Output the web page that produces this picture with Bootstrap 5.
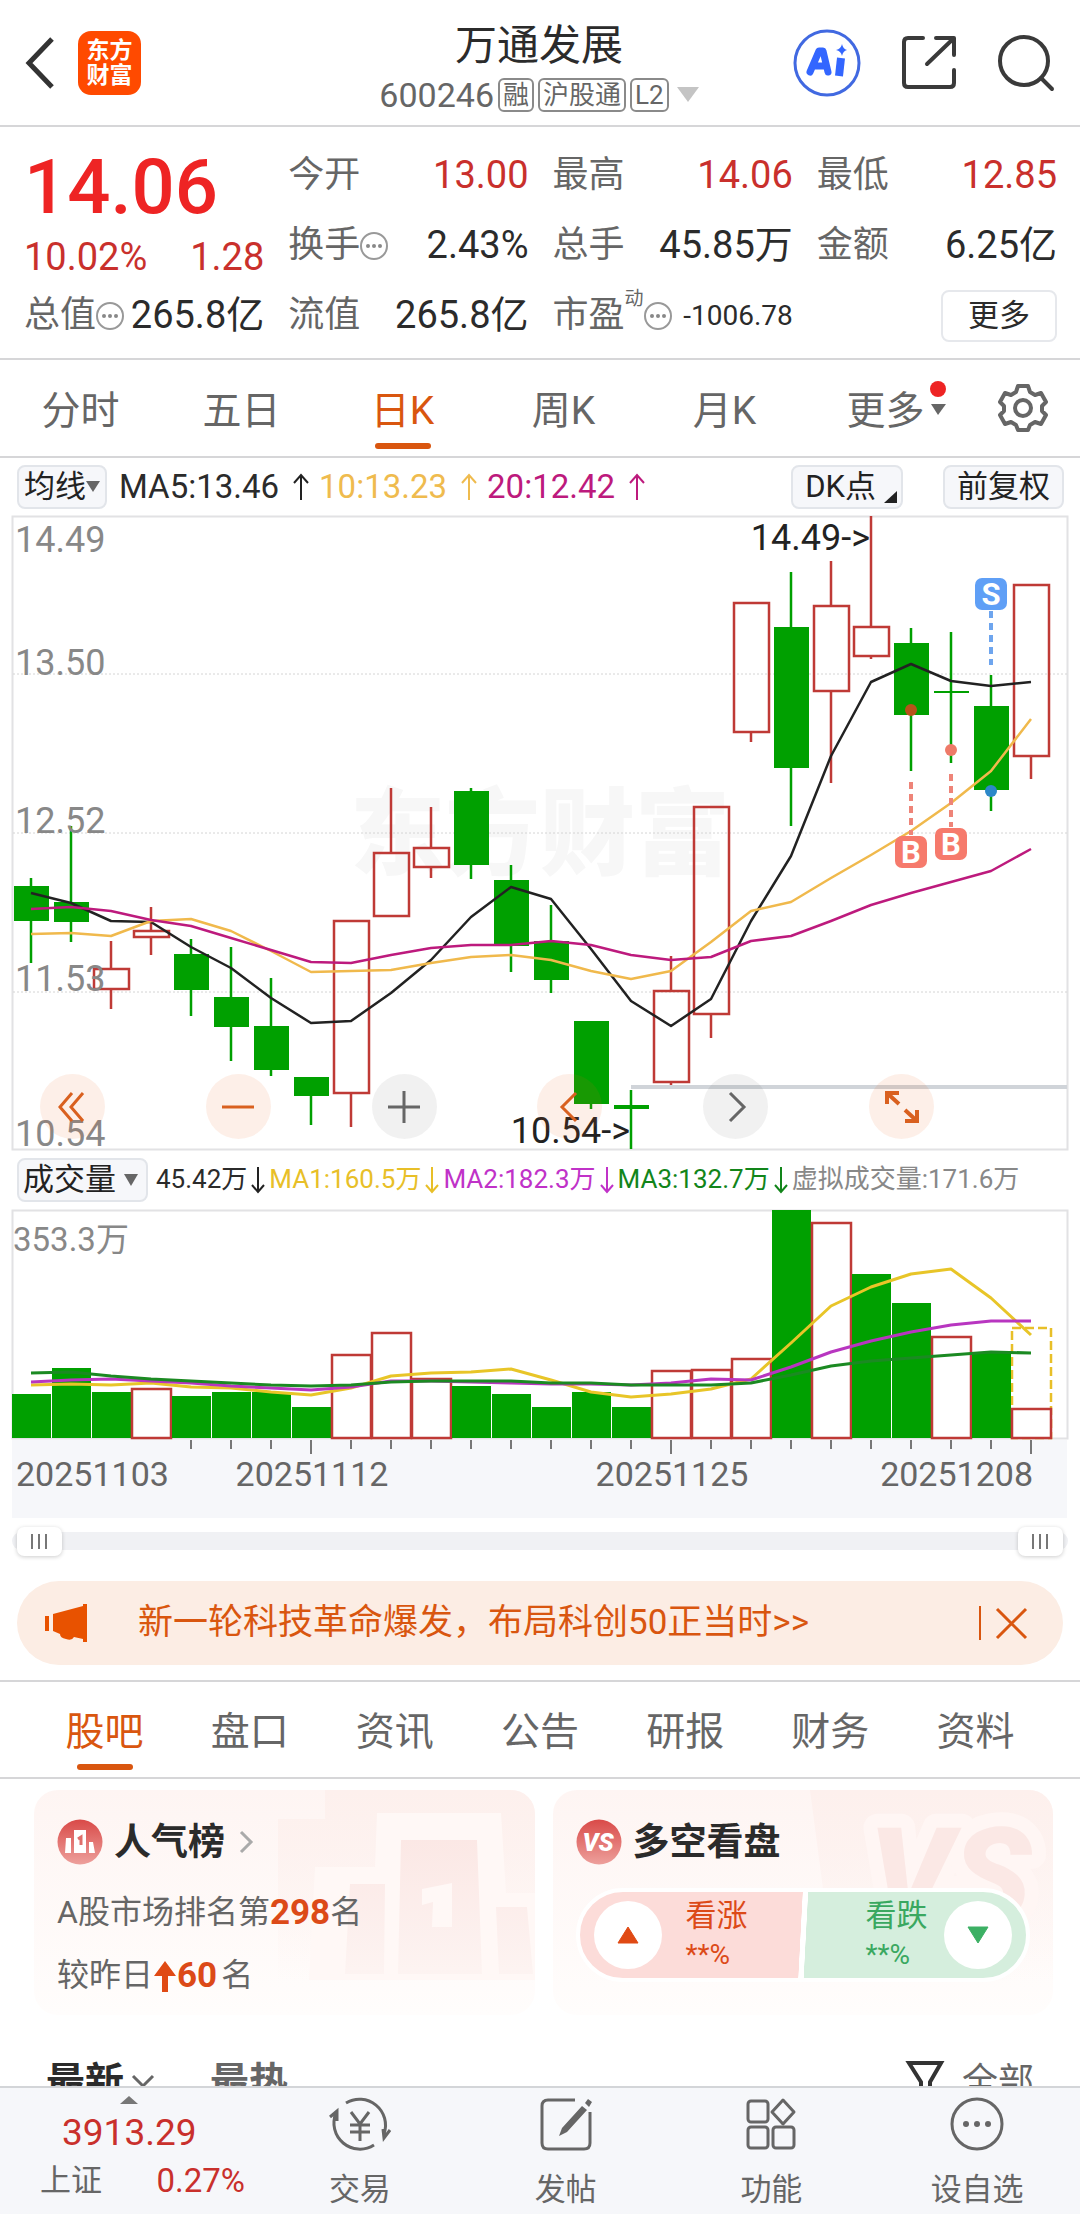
<!DOCTYPE html>
<html lang="zh-CN">
<head>
<meta charset="utf-8">
<meta name="viewport" content="width=device-width, initial-scale=1">
<title>万通发展 600246</title>
<link rel="stylesheet" href="https://cdn.jsdelivr.net/npm/bootstrap@5.3.0/dist/css/bootstrap.min.css">
<style>
  :root { --up:#c9302c; --brand:#d9560f; --ink:#2b2b2b; --dim:#666; --rule:#d6d6d8; --soft:#f6f7fa; }
  body { font-family: Roboto, "Noto Sans CJK SC", sans-serif; color: var(--ink); background: #fff; font-size: 31px; line-height: 1.2; overflow-x: hidden; }
  button { font-family: inherit; color: inherit; border: 0; background: none; padding: 0; line-height: 1.2; }
  svg { display: block; overflow: visible; }
  a { color: inherit; text-decoration: none; }
  .ruled { border-bottom: 2px solid var(--rule); }
  .up-text { color: var(--up); }
  .dim-text { color: var(--dim); }

  .top-bar { height: 127px; padding: 0 26px 0 24px; }
  .app-logo { width: 63px; height: 64px; margin-left: 22px; border-radius: 13px; background: #ff4a00; color: #fff; font-size: 23px; line-height: 25px; font-weight: 700; }
  .side-box { flex: 1 1 0; gap: 41px; }
  .stock-name { font-size: 42px; line-height: 50px; font-weight: 400; }
  .stock-code { font-size: 34px; line-height: 36px; color: var(--dim); margin-top: 6px; }
  .tag-box { border: 2px solid #8a8a8a; border-radius: 6px; font-size: 26px; line-height: 30px; padding: 0 3px; }

  .quote-grid { display: grid; grid-template-columns: repeat(4, minmax(0, 1fr)); column-gap: 24px; grid-template-rows: 70px 70px 70px; padding: 14px 23px 7px 24px; }
  .quote-grid > div { white-space: nowrap; }
  .price-cell { grid-row: span 2; padding: 6px 0 0; }
  .last-price { font-size: 76px; line-height: 80px; font-weight: 500; color: #ee2424; }
  .q-num { font-size: 38px; }
  .q-label { font-size: 36px; color: var(--dim); }
  .q-small { font-size: 28px; }
  .sup-mark { font-size: 19px; line-height: 20px; align-self: flex-start; padding-top: 8px; color: var(--dim); }
  .more-btn { height: 52px; width: 116px; border: 2px solid #e6e8ec; border-radius: 8px; font-size: 31px; }

  .tab-strip { height: 98px; }
  .tab-strip button, .sub-tabs button { flex: 1 1 0; height: 100%; padding-top: 6px; font-size: 39px; color: var(--dim); position: relative; }
  .tab-strip .gear-btn { flex: 0 0 114px; display: flex; justify-content: center; align-items: center; padding: 0; }
  .tab-strip .on, .sub-tabs .on { color: var(--brand); }
  .on::after { content: ""; position: absolute; bottom: 7px; left: 50%; width: 56px; height: 6px; margin-left: -28px; border-radius: 3px; background: var(--brand); }
  .red-dot { position: absolute; width: 16px; height: 16px; border-radius: 50%; background: #ee2424; right: 20px; top: 21px; }
  .tab-caret { position: absolute; right: 20px; top: 44px; }
  .ma-row { height: 57px; padding: 0 16px 0 17px; font-size: 33px; white-space: nowrap; }
  .ma-row .chip-btn { padding: 0 12px; }
  .ma-row .chip-btn:first-child { padding: 0 5px; }
  .ma-row .chip-btn:last-child { margin-left: 40px; }
  .chip-btn { height: 44px; border: 2px solid #e2e5ea; border-radius: 8px; background: var(--soft); font-size: 31px; color: #222; }
  .vol-row { height: 58px; padding: 0 16px 0 17px; font-size: 26px; white-space: nowrap; }
  .full-svg { width: 100%; height: auto; }
  svg text { font-family: Roboto, "Noto Sans CJK SC", sans-serif; }

  .chart-tools { position: absolute; left: 40px; right: 146px; bottom: 12px; }
  .round-btn { width: 65px; height: 65px; border-radius: 50%; background: rgba(238,100,30,.1); display: flex; align-items: center; justify-content: center; }
  .round-btn.grey { background: rgba(60,60,60,.07); }

  .range-wrap { position: relative; height: 18px; margin: 14px 12px 31px; border-radius: 9px; background: #f0f1f4; }
  .range-wrap input { position: absolute; left: 5px; top: -6px; width: calc(100% - 10px); height: 30px; margin: 0; appearance: none; background: none; pointer-events: none; }
  .range-wrap input::-webkit-slider-thumb { appearance: none; pointer-events: auto; width: 45px; height: 29px; border-radius: 7px; box-shadow: 0 1px 4px rgba(0,0,0,.2);
    background: linear-gradient(#777,#777) 14px 7px/2px 15px no-repeat, linear-gradient(#777,#777) 21px 7px/2px 15px no-repeat, linear-gradient(#777,#777) 28px 7px/2px 15px no-repeat, #fff; }

  .notice { margin: 0 17px 15px; height: 84px; border-radius: 42px; background: #fcede4; color: var(--brand); font-size: 35px; padding: 0 36px 0 28px; }
  .notice .txt { margin-left: 51px; }
  .bar-line { width: 2px; height: 34px; background: var(--brand); margin-right: 15px; }
  .sub-tabs { height: 99px; padding: 0 32px; border-top: 2px solid var(--rule); }

  .promo-row { padding: 11px 27px 0 34px; gap: 18px; }
  .promo { flex: 1 1 0; height: 225px; border-radius: 24px; background: linear-gradient(#fef5f3, #fffdfc); position: relative; overflow: hidden; padding: 24px 23px 0; }
  .promo .art { position: absolute; right: 0; top: 0; }
  .promo .inner { position: relative; }
  .promo h2 { font-size: 37px; line-height: 54px; font-weight: 700; margin: 0; padding-left: 11px; padding-top: 2px; }
  .promo .strong-num { font-size: 35px; font-weight: 700; color: #dc4a18; }
  .promo .ln { line-height: 63px; font-size: 32px; color: var(--dim); display: flex; align-items: center; }
  .promo .ln:nth-child(2) { margin-top: 11px; }
  .vote { height: 94px; width: 454px; margin-top: 18px; border: 4px solid #fff; border-radius: 47px; overflow: hidden; background: linear-gradient(93deg, #fcdcd9 49.4%, #fff 49.5%, #fff 50.6%, #d5eedd 50.7%); }
  .vote button { height: 86px; flex: 1 1 0; padding: 0 14px; font-size: 31px; line-height: 38px; text-align: left; }
  .vote .pct { font-size: 28px; }
  .disc { width: 68px; height: 68px; border-radius: 50%; background: #fff; display: flex; align-items: center; justify-content: center; }

  .feed-bar { padding: 44px 46px 0; font-size: 39px; line-height: 54px; }
  .feed-bar .filter-btn { font-size: 36px; gap: 16px; }
  .bottom-bar { height: 128px; background: var(--soft); border-top: 2px solid #d3d5d8; }
  .index-box { flex: 0 0 257px; padding: 8px 12px 0 40px; }
  .index-box svg { margin-left: 80px; }
  .index-val { font-size: 37px; line-height: 58px; padding-left: 22px; }
  .index-pct { font-size: 33px; line-height: 34px; }
  .nav-col { flex: 1 1 0; padding-top: 8px; color: var(--dim); }
  .nav-col .cap { line-height: 38px; margin-top: 19px; }
</style>
<script src="https://cdn.jsdelivr.net/npm/bootstrap@5.3.0/dist/js/bootstrap.bundle.min.js"></script>
</head>
<body>

<header class="top-bar ruled d-flex align-items-center">
  <div class="side-box d-flex align-items-center gap-0">
    <button aria-label="返回"><svg width="32" height="54" viewBox="0 0 32 54" fill="none" stroke="#333" stroke-width="5"><path d="M28 3 5 27l23 24"/></svg></button>
    <a href="#" class="app-logo text-center d-flex align-items-center justify-content-center">东方<br>财富</a>
  </div>
  <div class="text-center pt-2">
    <h1 class="stock-name m-0">万通发展</h1>
    <div class="stock-code d-flex align-items-center gap-1">
      <span>600246</span><span class="tag-box">融</span><span class="tag-box">沪股通</span><span class="tag-box">L2</span>
      <svg class="ms-1" width="22" height="15"><path d="M0 0h22L11 15z" fill="#c4c4c4"/></svg>
    </div>
  </div>
  <div class="side-box d-flex align-items-center justify-content-end">
    <button aria-label="AI"><svg width="68" height="68" viewBox="0 0 68 68"><circle cx="34" cy="34" r="32" fill="#fff" stroke="#4169e1" stroke-width="3"/><g fill="none" stroke="#3366ff" stroke-linejoin="round" stroke-linecap="round"><path d="M17 43 26 22h4l5 21M22 37h10" stroke-width="7"/><path d="M48 29 46 47" stroke-width="8" stroke-linecap="butt"/></g><path d="M49 15q1 5 5 6-4 1-5 6-1-5-6-6 5-1 6-6z" fill="#3366ff"/></svg></button>
    <button aria-label="分享"><svg width="55" height="56" viewBox="0 0 55 56" fill="none" stroke="#3a3a3a" stroke-width="4" stroke-linecap="round" stroke-linejoin="round"><path d="M21 3H6Q2 3 2 7v41q0 4 4 4h42q4 0 4-4V35M34 3h18v17M51 4 25 29"/></svg></button>
    <button aria-label="搜索"><svg width="56" height="56" viewBox="0 0 56 56" fill="none" stroke="#3a3a3a" stroke-width="4" stroke-linecap="round"><circle cx="26" cy="26" r="24"/><path d="m43 43 11 11"/></svg></button>
  </div>
</header>

<section class="quote-grid ruled">
  <div class="price-cell">
    <div class="last-price">14.06</div>
    <div class="d-flex justify-content-between q-num up-text mt-2"><span>10.02%</span><span>1.28</span></div>
  </div>
  <div class="d-flex align-items-center justify-content-between"><span class="q-label">今开</span><span class="q-num up-text">13.00</span></div>
  <div class="d-flex align-items-center justify-content-between"><span class="q-label">最高</span><span class="q-num up-text">14.06</span></div>
  <div class="d-flex align-items-center justify-content-between"><span class="q-label">最低</span><span class="q-num up-text">12.85</span></div>
  <div class="d-flex align-items-center"><span class="q-label">换手</span><svg width="28" height="28" viewBox="0 0 28 28"><use href="#more-dots"/></svg><span class="q-num ms-auto">2.43%</span></div>
  <div class="d-flex align-items-center justify-content-between"><span class="q-label">总手</span><span class="q-num">45.85万</span></div>
  <div class="d-flex align-items-center justify-content-between"><span class="q-label">金额</span><span class="q-num">6.25亿</span></div>
  <div class="d-flex align-items-center"><span class="q-label">总值</span><svg width="28" height="28" viewBox="0 0 28 28"><use href="#more-dots"/></svg><span class="q-num ms-auto">265.8亿</span></div>
  <div class="d-flex align-items-center justify-content-between"><span class="q-label">流值</span><span class="q-num">265.8亿</span></div>
  <div class="d-flex align-items-center"><span class="q-label">市盈</span><span class="sup-mark">动</span><svg width="28" height="28" viewBox="0 0 28 28"><use href="#more-dots"/></svg><span class="q-small ms-auto">-1006.78</span></div>
  <div class="d-flex align-items-center justify-content-end"><button class="more-btn">更多</button></div>
</section>

<svg width="0" height="0" class="position-absolute"><defs><g id="more-dots"><circle cx="14" cy="14" r="13" fill="none" stroke="#999" stroke-width="2"/><g fill="#888"><circle cx="8" cy="14" r="2"/><circle cx="14" cy="14" r="2"/><circle cx="20" cy="14" r="2"/></g></g></defs></svg>

<nav class="tab-strip ruled d-flex">
  <button>分时</button><button>五日</button><button class="on">日K</button><button>周K</button><button>月K</button>
  <button>更多<span class="red-dot"></span><svg class="tab-caret" width="15" height="11"><path d="M0 0h15L7 11z" fill="#666"/></svg></button>
  <button class="gear-btn" aria-label="设置"><svg width="50" height="50" viewBox="0 0 50 50" fill="none" stroke="#666" stroke-width="4" stroke-linejoin="round"><path d="M20 3h10l2 6 5 3 6-2 5 9-4 4v5l4 4-5 9-6-2-5 3-2 5H20l-2-5-5-3-6 2-5-9 4-4v-5l-4-4 5-9 6 2 5-3z"/><circle cx="25" cy="25" r="8"/></svg></button>
</nav>

<section class="ma-row d-flex align-items-center">
  <button class="chip-btn d-flex align-items-center"><span>均线</span><svg width="14" height="11"><path d="M0 0h14L7 11z" fill="#666"/></svg></button>
  <span class="ms-2 ps-1">MA5:13.46</span><svg class="ms-2 me-2 ps-1" width="24" height="28"><use href="#arr-up" stroke="#222"/></svg>
  <span style="color:#efbb4e">10:13.23</span><svg class="ms-2 me-2 ps-1" width="24" height="28"><use href="#arr-up" stroke="#efbb4e"/></svg>
  <span style="color:#bd1a7d">20:12.42</span><svg class="ms-2 me-2 ps-1" width="24" height="28"><use href="#arr-up" stroke="#bd1a7d"/></svg>
  <button class="chip-btn d-flex align-items-center ms-auto pe-1"><span>DK点</span><svg class="ms-2 align-self-end mb-1" width="13" height="12"><path d="M13 0v12H0z" fill="#222"/></svg></button>
  <button class="chip-btn"><span>前复权</span></button>
</section>
<svg width="0" height="0" class="position-absolute"><defs>
  <g id="arr-up" fill="none" stroke-width="2"><path d="M10 27V2M3 10l7-8 7 8"/></g>
  <g id="arr-dn" fill="none" stroke-width="2"><path d="M7 1v25M1 19l6 7 6-7"/></g>
</defs></svg>

<section class="position-relative">
  <svg class="full-svg" id="kline" viewBox="0 515 1080 636" role="img" aria-label="日K线图">
    <text x="350" y="868" font-size="95" font-weight="900" fill="#f7f7f7">东方财富</text>
    <g fill="none" stroke="#e2e2e4" stroke-width="2"><path d="M12.500 516.500h1055v633h-1055z"/></g>
    <path d="M13 674h1054M13 833h1054M13 992h1054" stroke="#d4d4d4" stroke-dasharray="2 2"/>
    <path d="M631 1087h436" stroke="#d0d4d9" stroke-width="4"/>
    <g id="candles"></g>
    <g id="averages" fill="none" stroke-width="2.500" stroke-linejoin="round"></g>
    <g stroke-width="4" stroke-dasharray="7 5"><path d="M991 611v54" stroke="#6ea5ee"/><path d="M911 782v53M951 774v53" stroke="#ee8478"/></g>
    <circle cx="911" cy="710" r="6" fill="#b8521a"/><circle cx="951" cy="750" r="6" fill="#ee7a68"/><circle cx="991" cy="791" r="6" fill="#2c88c8"/>
    <rect x="975" y="578" width="32" height="32" rx="7" fill="#5f9ff6"/><rect x="895" y="836" width="32" height="32" rx="7" fill="#f67a6c"/><rect x="935" y="828" width="32" height="32" rx="7" fill="#f67a6c"/>
    <g fill="#fff" font-size="31" font-weight="700" text-anchor="middle"><text x="991" y="605">S</text><text x="911" y="863">B</text><text x="951" y="855">B</text></g>
    <g fill="#888" font-size="36"><text x="15" y="552">14.49</text><text x="15" y="675">13.50</text><text x="15" y="833">12.52</text><text x="15" y="991">11.53</text><text x="15" y="1146">10.54</text></g>
    <g fill="#222" font-size="36" text-anchor="end"><text x="870" y="550">14.49-&gt;</text><text x="630" y="1143">10.54-&gt;</text></g>
  </svg>
  <div class="chart-tools d-flex justify-content-between">
    <button class="round-btn" aria-label="最左"><svg width="28" height="32" fill="none" stroke="#d9601f" stroke-width="3"><path d="M13 2 1 16l12 14M24 2 12 16l12 14"/></svg></button>
    <button class="round-btn" aria-label="缩小"><svg width="32" height="32" stroke="#d9601f" stroke-width="3"><path d="M0 16h32"/></svg></button>
    <button class="round-btn grey" aria-label="放大"><svg width="32" height="32" stroke="#666" stroke-width="3"><path d="M0 16h32M16 0v32"/></svg></button>
    <button class="round-btn" aria-label="左移"><svg width="20" height="32" fill="none" stroke="#d9601f" stroke-width="3"><path d="M16 2 2 16l14 14"/></svg></button>
    <button class="round-btn grey" aria-label="右移"><svg width="20" height="32" fill="none" stroke="#666" stroke-width="3"><path d="m4 2 14 14L4 30"/></svg></button>
    <button class="round-btn" aria-label="全屏"><svg width="34" height="34" fill="none" stroke="#d9601f" stroke-width="4"><path d="M3 14V3h12M3 3l12 11M33 20v11H21M33 31 21 20"/></svg></button>
  </div>
</section>

<section class="vol-row d-flex align-items-center">
  <button class="chip-btn d-flex align-items-center px-1"><span>成交量</span><svg class="ms-2 me-1" width="14" height="12"><path d="M0 0h14L7 12z" fill="#666"/></svg></button>
  <span class="ms-2">45.42万</span><svg class="ms-1" width="14" height="28"><use href="#arr-dn" stroke="#222"/></svg>
  <span class="ms-1" style="color:#e8bf28">MA1:160.5万</span><svg class="ms-1" width="14" height="28"><use href="#arr-dn" stroke="#e8bf28"/></svg>
  <span class="ms-1" style="color:#c032c8">MA2:182.3万</span><svg class="ms-1" width="14" height="28"><use href="#arr-dn" stroke="#c032c8"/></svg>
  <span class="ms-1" style="color:#12851a">MA3:132.7万</span><svg class="ms-1" width="14" height="28"><use href="#arr-dn" stroke="#12851a"/></svg>
  <span class="ms-1" style="color:#888">虚拟成交量:171.6万</span>
</section>

<svg class="full-svg" viewBox="0 1209 1080 309" role="img" aria-label="成交量图">
  <path d="M12.500 1210.500h1055v228h-1055z" fill="none" stroke="#e2e2e4" stroke-width="2"/>
  <rect x="12" y="1440" width="1055" height="78" fill="#f6f7fa"/>
  <g id="bars"></g>
  <g id="volavg" fill="none" stroke-width="3" stroke-linejoin="round"></g>
  <g id="ticks" stroke="#777" stroke-width="2"></g>
  <text x="13" y="1251" font-size="33" fill="#888">353.3万</text>
  <g fill="#666" font-size="34"><text x="16" y="1486">20251103</text><text x="312" y="1486" text-anchor="middle">20251112</text><text x="672" y="1486" text-anchor="middle">20251125</text><text x="1033" y="1486" text-anchor="end">20251208</text></g>
</svg>

<div class="range-wrap"><input type="range" min="0" max="100" value="0" aria-label="起始日期"><input type="range" min="0" max="100" value="100" aria-label="结束日期"></div>

<aside class="notice d-flex align-items-center">
  <svg width="42" height="38" fill="#e85200"><path d="M0 12h4v15H0zM8 10 38 2V0h4v38h-4v-3l-9-2q-2 4-8 2-6-1-6-5l-7-3z"/></svg>
  <a href="#" class="txt">新一轮科技革命爆发，布局科创50正当时&gt;&gt;</a>
  <span class="bar-line ms-auto"></span>
  <button aria-label="关闭"><svg width="31" height="31" stroke="#d9560f" stroke-width="3"><path d="m1 1 29 29M30 1 1 30"/></svg></button>
</aside>

<nav class="sub-tabs ruled d-flex">
  <button class="on">股吧</button><button>盘口</button><button>资讯</button><button>公告</button><button>研报</button><button>财务</button><button>资料</button>
</nav>

<section class="promo-row d-flex">
  <div class="promo">
    <svg class="art" width="262" height="225"><defs>
      <linearGradient id="fadeA" gradientUnits="userSpaceOnUse" x1="0" y1="0" x2="0" y2="190"><stop stop-color="#fdf0ed"/><stop offset="1" stop-color="#fdf0ed" stop-opacity="0"/></linearGradient>
      <linearGradient id="fadeB" gradientUnits="userSpaceOnUse" x1="0" y1="30" x2="0" y2="190"><stop stop-color="#fbe6e3"/><stop offset="1" stop-color="#fdf4f2"/></linearGradient></defs>
      <path d="M52 0h210v190H5V29h47z" fill="url(#fadeA)"/><path d="M42 77h60l2-54h124l5 80h29v87H36z" fill="#fff8f6"/>
      <path d="M77 94h35l-1 90H72zM128 50h76l5 134h-84zM223 117h31l6 67h-34z" fill="url(#fadeB)"/><path d="m149 99 30-6v44h-20l1-25-11 3z" fill="#fff8f6"/></svg>
    <div class="inner">
      <div class="d-flex align-items-center"><svg width="46" height="46"><defs><linearGradient id="gr" x2="0" y2="1"><stop stop-color="#d94a48"/><stop offset="1" stop-color="#eda09c"/></linearGradient></defs><circle cx="23" cy="23" r="22.500" fill="url(#gr)"/><path d="M9 19h5v15H8zM17 11h12v23H17zM32 23h4l2 11h-6z" fill="#fff"/><path d="m21 20 3-2v8" fill="none" stroke="#df6f6b" stroke-width="3"/></svg>
      <h2>人气榜</h2><svg class="ms-2 ps-1" width="13" height="24" fill="none" stroke="#aaa" stroke-width="3"><path d="m4 2 10 10L4 22"/></svg></div>
      <div class="ln"><span>A股市场排名第</span><span class="strong-num">298</span><span>名</span></div>
      <div class="ln"><span>较昨日</span><svg width="24" height="34"><path d="m12 2 11 15h-8v16H9V17H1z" fill="#e04a14"/></svg><span class="strong-num">60</span><span class="ms-1">名</span></div>
    </div>
  </div>
  <div class="promo">
    <svg class="art" width="244" height="225"><path d="M1 0h243v190H26z" fill="url(#fadeA)"/><text x="60" y="130" font-size="130" font-weight="900" font-style="italic" fill="#fbe8e5" stroke="#fff6f4" stroke-width="28" stroke-linejoin="round" paint-order="stroke">VS</text></svg>
    <div class="inner">
      <div class="d-flex align-items-center"><svg width="46" height="46"><circle cx="23" cy="23" r="22.500" fill="url(#gr)"/><text x="22" y="32" font-size="25" font-weight="900" font-style="italic" fill="#fff" text-anchor="middle">VS</text></svg><h2>多空看盘</h2></div>
      <div class="vote d-flex">
        <button class="d-flex align-items-center" style="color:#dc4a18"><span class="disc"><svg width="22" height="18"><path d="M11 1 21 17H1z" fill="#e04a14" stroke="#e04a14" stroke-linejoin="round"/></svg></span><span class="ms-4">看涨<br><span class="pct">**%</span></span></button>
        <button class="d-flex align-items-center justify-content-end" style="color:#3aa860"><span class="me-3">看跌<br><span class="pct">**%</span></span><span class="disc"><svg width="22" height="18"><path d="M11 17 21 1H1z" fill="#3cb064" stroke="#3cb064" stroke-linejoin="round"/></svg></span></button>
      </div>
    </div>
  </div>
</section>

<section class="feed-bar d-flex align-items-center">
  <button class="fw-bold d-flex align-items-center">最新<svg class="ms-2" width="22" height="14" fill="none" stroke="#666" stroke-width="3"><path d="m1 1 10 10L21 1"/></svg></button>
  <button class="fw-bold dim-text ms-5 ps-2">最热</button>
  <button class="filter-btn dim-text ms-auto d-flex align-items-center"><svg width="40" height="44" fill="none" stroke="#333" stroke-width="4"><path d="M3 3h32L24 22v17l-9-6V22z"/><path d="M29 29h10" stroke="#d9560f"/></svg>全部</button>
</section>

<footer class="bottom-bar fixed-bottom d-flex">
  <div class="index-box">
    <svg width="18" height="8"><path d="M9 0l9 8H0z" fill="#777"/></svg>
    <div class="index-val up-text">3913.29</div>
    <div class="d-flex justify-content-between align-items-center"><span class="dim-text">上证</span><span class="index-pct up-text">0.27%</span></div>
  </div>
  <a href="#" class="nav-col text-center"><svg class="mx-auto" width="62" height="56" viewBox="0 0 62 56" fill="none" stroke="#666" stroke-width="3"><path d="M17 7A26 26 0 0 1 55 38M45 49A26 26 0 0 1 7 17M1 21l7-6v10M61 34l-6 8-1-9"/><path d="m22 16 9 12 9-12M31 28v17M21 29h20M21 36h20"/></svg><div class="cap">交易</div></a>
  <a href="#" class="nav-col text-center"><svg class="mx-auto" width="54" height="56" viewBox="0 0 54 56" fill="none" stroke="#666" stroke-width="3"><path d="M36 4H9Q3 4 3 10v37q0 6 6 6h36q6 0 6-6V16"/><path d="M23 32 43 10l5 4-20 22-8 4zM46 7l3-4 4 3-3 5z" fill="#666" stroke="none"/></svg><div class="cap">发帖</div></a>
  <a href="#" class="nav-col text-center"><svg class="mx-auto" width="52" height="56" viewBox="0 0 52 56" fill="none" stroke="#666" stroke-width="3"><rect x="3" y="5" width="20" height="21" rx="3"/><rect x="3" y="31" width="20" height="21" rx="3"/><rect x="28" y="31" width="21" height="21" rx="3"/><path d="m38 4 11 12-11 12-11-12z" stroke-linejoin="round"/></svg><div class="cap">功能</div></a>
  <a href="#" class="nav-col text-center"><svg class="mx-auto" width="56" height="56" viewBox="0 0 56 56" fill="none" stroke="#666" stroke-width="3"><circle cx="28" cy="28" r="25"/><g fill="#666" stroke="none"><circle cx="17" cy="28" r="3"/><circle cx="28" cy="28" r="3"/><circle cx="39" cy="28" r="3"/></g></svg><div class="cap">设自选</div></a>
</footer>

<script>
  const X = i => 31 + 40 * i, GREEN = '#00a000', RED = '#bf3a36';
  // kind, high, body top, body bottom, low
  const days = [
    'g,878,886,921,963','g,826,902,922,942','r,941,969,989,1009','r,907,931,937,955','g,939,954,990,1016','g,947,997,1027,1061',
    'g,978,1026,1070,1076','g,1077,1077,1096,1125','r,921,921,1093,1127','r,788,853,916,916','r,807,848,867,878','g,788,791,865,879',
    'g,865,880,946,972','g,905,941,980,993','g,1021,1021,1104,1109','g,1090,1105,1109,1149','r,956,991,1082,1085','r,807,807,1014,1038',
    'r,603,603,732,742','g,572,627,768,826','r,561,606,691,783','r,516,627,656,659','g,628,643,715,771','g,632,691,693,763',
    'g,675,706,790,811','r,585,585,756,779'].map(s => s.split(','));
  document.getElementById('candles').innerHTML = days.map(([k, h, t, b, l], i) => {
    const c = k === 'g' ? GREEN : RED, x = X(i);
    return `<path d="M${x} ${h}V${t}M${x} ${b}V${l}" stroke="${c}" stroke-width="2.5"/>` + (k === 'g'
      ? `<rect x="${x - 17}" y="${t}" width="35" height="${b - t}" fill="${c}"/>`
      : `<rect x="${x - 17}" y="${t}" width="35" height="${b - t}" fill="none" stroke="${c}" stroke-width="2.5"/>`);
  }).join('');
  const line = (ys, c) => `<polyline stroke="${c}" points="${ys.map((y, i) => X(i) + ',' + y).join(' ')}"/>`;
  document.getElementById('averages').innerHTML =
    line([893,903,921,922,947,968,998,1023,1021,993,960,917,887,899,949,1001,1026,999,921,856,756,682,664,681,686,682], '#222') +
    line([934,933,936,921,919,931,951,972,971,970,963,957,955,960,971,979,971,942,911,902,878,855,831,803,771,719], '#f0b94c') +
    line([909,907,911,920,926,938,950,962,963,955,948,945,945,941,945,955,960,957,941,936,921,905,893,882,871,849], '#bd1a7d');
  const vol = 'g1394 g1368 g1392 r1389 g1396 g1392 g1392 g1407 r1355 r1333 r1379 g1386 g1394 g1407 g1392 g1407 r1371 r1370 r1359 g1210 r1223 g1274 g1303 r1337 g1352 r1409'.split(' ');
  document.getElementById('bars').innerHTML = '<rect x="1012" y="1328" width="39" height="110" fill="none" stroke="#e8bf28" stroke-width="2.5" stroke-dasharray="9 4"/>' + vol.map((v, i) => {
    const t = +v.slice(1), x = X(i) - 19;
    return v[0] === 'g' ? `<rect x="${x}" y="${t}" width="39" height="${1438 - t}" fill="${GREEN}"/>`
      : `<rect x="${x}" y="${t}" width="39" height="${1438 - t}" fill="#fff" stroke="${RED}" stroke-width="2.5"/>`;
  }).join('');
  document.getElementById('volavg').innerHTML =
    line([1385,1384,1385,1383,1387,1388,1392,1395,1388,1376,1373,1372,1369,1380,1392,1397,1394,1389,1379,1343,1306,1287,1274,1269,1298,1335], '#e8c528') +
    line([1382,1380,1379,1381,1383,1386,1388,1390,1387,1381,1381,1382,1383,1384,1384,1385,1383,1379,1380,1367,1352,1341,1332,1325,1321,1321], '#b836c0') +
    line([1373,1372,1376,1379,1381,1383,1385,1386,1385,1382,1381,1381,1381,1383,1383,1385,1385,1385,1383,1375,1366,1361,1358,1355,1352,1353], '#1b8a22');
  document.getElementById('ticks').innerHTML = vol.map((v, i) => i < 4 ? '' : `<path d="M${X(i)} 1440v${i % 9 === 7 ? 14 : 9}"/>`).join('');
</script>
</body>
</html>
